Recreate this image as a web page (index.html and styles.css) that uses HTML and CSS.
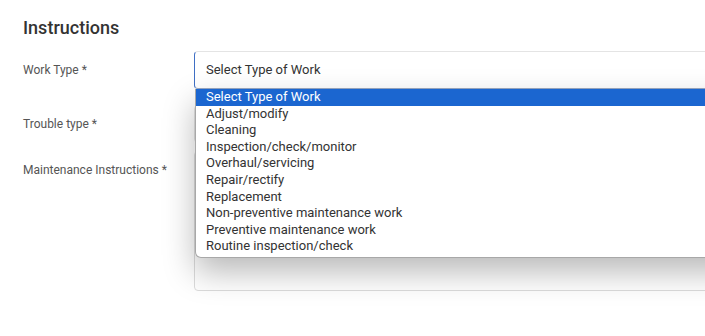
FILE: index.html
```html
<!DOCTYPE html>
<html lang="en">
  <head>
    <meta charset="UTF-8" />
    <meta name="viewport" content="width=device-width, initial-scale=1.0" />
    <title>Instructions</title>
    <link rel="stylesheet" href="styles.css">
  </head>
  <body>
    <div class="panel">
      <h2 class="title">Instructions</h2>

      <div class="row">
        <label class="label">Work Type *</label>
        <div class="field">
          <div class="select focused">Select Type of Work</div>
          <ul class="options">
            <li class="option active">Select Type of Work</li>
            <li class="option">Adjust/modify</li>
            <li class="option">Cleaning</li>
            <li class="option">Inspection/check/monitor</li>
            <li class="option">Overhaul/servicing</li>
            <li class="option">Repair/rectify</li>
            <li class="option">Replacement</li>
            <li class="option">Non-preventive maintenance work</li>
            <li class="option">Preventive maintenance work</li>
            <li class="option">Routine inspection/check</li>
          </ul>
        </div>
      </div>

      <div class="row tight">
        <label class="label">Trouble type *</label>
        <div class="field">
          <div class="select"></div>
        </div>
      </div>

      <div class="row">
        <label class="label">Maintenance Instructions *</label>
        <div class="field">
          <div class="textarea"></div>
        </div>
      </div>
    </div>
  </body>
</html>
```

FILE: styles.css
```css
* {
  margin: 0;
  padding: 0;
  box-sizing: border-box;
}
html,
body {
  width: 705px;
  height: 336px;
  overflow: hidden;
  background: #fff;
}
body {
  font-family: Roboto, "Liberation Sans", Arial, sans-serif;
  color: #333;
}
.panel {
  width: 900px;
  padding: 16px 0 0 23px;
  display: flex;
  flex-direction: column;
}
.title {
  font-size: 18px;
  font-weight: 500;
  line-height: 24px;
  color: #333;
  margin-bottom: 11px;
}
.row {
  display: flex;
  align-items: flex-start;
  margin-bottom: 16px;
}
.row.tight {
  margin-bottom: 8px;
}
.label {
  width: 171px;
  flex: 0 0 171px;
  font-size: 12px;
  color: #555;
  line-height: 16px;
  padding-top: 11px;
}
.field {
  position: relative;
  flex: 1;
}
.select {
  height: 38px;
  border: 1px solid #e2e2e2;
  border-radius: 4px;
  padding: 0 11px;
  font-size: 13px;
  line-height: 36px;
  color: #333;
  background: #fff;
}
.select.focused {
  border-color: #e4e4e4;
  border-left-color: #3f6fc4;
  border-bottom-color: #9aa9c4;
  border-radius: 4px 0 0 4px;
}
.textarea {
  height: 140px;
  border: 1px solid #dcdcdc;
  border-radius: 4px;
  background: #fff;
}
.options {
  position: absolute;
  top: 38px;
  left: 1px;
  width: 700px;
  list-style: none;
  background: #fff;
  border: 1px solid #a8a8a8;
  border-top: none;
  border-radius: 0 0 0 6px;
  padding-bottom: 2px;
  box-shadow: 0 14px 32px rgba(0, 0, 0, 0.28);
  z-index: 2;
}
.option {
  height: 16.6px;
  line-height: 16.6px;
  font-size: 13px;
  color: #333;
  padding-left: 10px;
  white-space: nowrap;
}
.option.active {
  background: #1b66d0;
  color: #fff;
}
```
